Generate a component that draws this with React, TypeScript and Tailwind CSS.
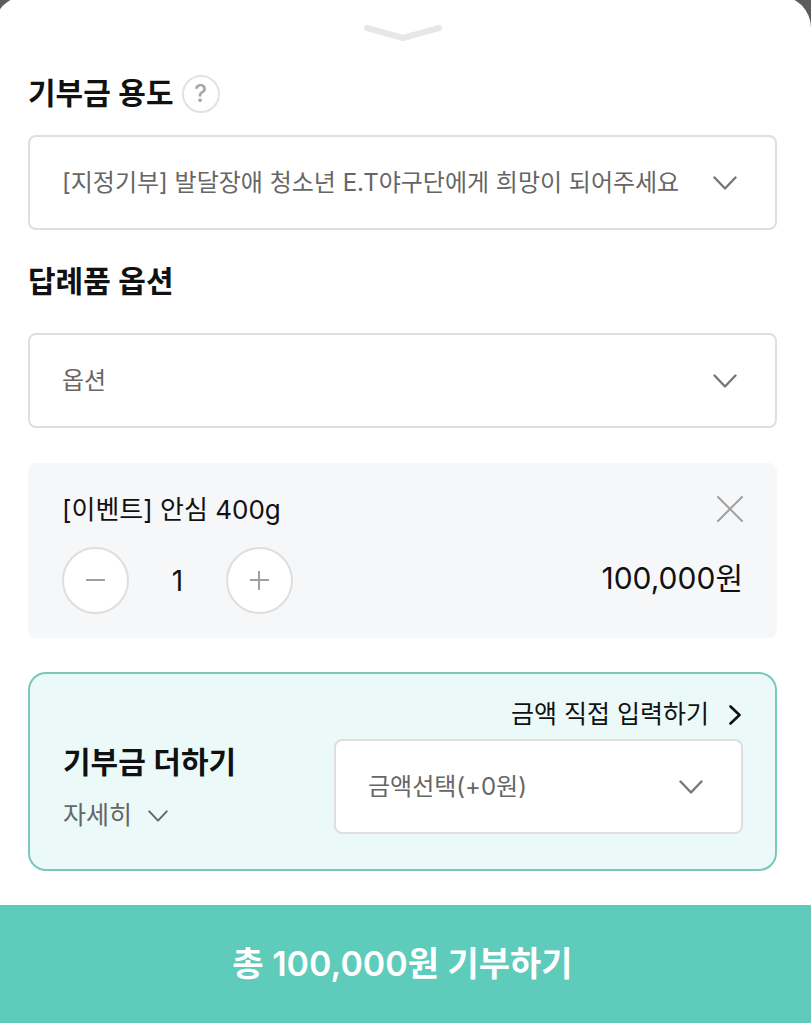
import { useState } from 'react'
import type { ReactNode } from 'react'

type IconProps = { className?: string }

function ChevronDown({ className = '' }: IconProps) {
  return (
    <svg
      viewBox="0 0 24 14"
      fill="none"
      stroke="currentColor"
      strokeWidth="2.4"
      strokeLinecap="round"
      strokeLinejoin="round"
      aria-hidden="true"
      className={className}
    >
      <path d="M1.5 1.5 12 12.5 22.5 1.5" />
    </svg>
  )
}

type SelectBoxProps = {
  id: string
  children: ReactNode
}

function SelectBox({ id, children }: SelectBoxProps) {
  return (
    <div className="grid items-center">
      <select
        id={id}
        className="col-start-1 row-start-1 h-[95px] w-full appearance-none rounded-lg border-2 border-[#dfdfdf] bg-white pr-20 pl-8 text-[24px] text-[#666]"
      >
        {children}
      </select>
      <ChevronDown className="pointer-events-none col-start-1 row-start-1 mr-10 h-[14px] w-6 justify-self-end text-[#777]" />
    </div>
  )
}

export default function App() {
  const [quantity, setQuantity] = useState(1)
  const total = `${(quantity * 100000).toLocaleString('en-US')}원`

  return (
    <div className="min-h-screen overflow-hidden bg-[#5c5c5c] font-['Inter','Noto_Sans_CJK_KR',sans-serif] text-[#111]">
      <main className="-mt-1 -ml-1.5 min-h-screen rounded-t-[32px] bg-white pb-0.5">
        {/* Handle */}
        <div className="flex justify-center pt-7">
          <button type="button" aria-label="닫기">
            <svg viewBox="0 0 80 18" fill="none" className="h-[18px] w-20">
              <path
                d="M4 4 40 14 76 4"
                stroke="#e7e7e7"
                strokeWidth="6"
                strokeLinecap="round"
                strokeLinejoin="round"
              />
            </svg>
          </button>
        </div>

        <div className="px-[34px]">
          {/* Purpose */}
          <div className="flex h-[93px] items-center gap-2 pt-2.5">
            <label htmlFor="purpose" className="text-[30px] font-semibold">
              기부금 용도
            </label>
            <button
              type="button"
              aria-label="기부금 용도 도움말"
              className="flex size-[38px] items-center justify-center rounded-full border-2 border-[#e2e2e2] text-[24px] leading-6 font-medium text-[#a6a6a6]"
            >
              ?
            </button>
          </div>
          <SelectBox id="purpose">
            <option>[지정기부] 발달장애 청소년 E.T야구단에게 희망이 되어주세요</option>
          </SelectBox>

          {/* Option */}
          <div className="flex h-[103px] items-center">
            <label htmlFor="option" className="text-[30px] font-semibold">
              답례품 옵션
            </label>
          </div>
          <SelectBox id="option">
            <option>옵션</option>
            <option>[이벤트] 안심 400g</option>
          </SelectBox>

          {/* Selected item */}
          <section className="mt-[35px] rounded-lg bg-[#f6f7f9] px-[34px] pt-6 pb-6">
            <div className="flex h-[44px] items-center justify-between">
              <h2 className="text-[26px]">[이벤트] 안심 400g</h2>
              <button type="button" aria-label="삭제">
                <svg
                  viewBox="0 0 26 26"
                  fill="none"
                  stroke="#a0a0a0"
                  strokeWidth="2"
                  strokeLinecap="round"
                  className="size-[26px]"
                >
                  <path d="M1 1 25 25M25 1 1 25" />
                </svg>
              </button>
            </div>
            <div className="mt-4 flex items-center justify-between">
              <div className="flex items-center">
                <button
                  type="button"
                  aria-label="수량 감소"
                  onClick={() => setQuantity(Math.max(1, quantity - 1))}
                  className="flex size-[67px] items-center justify-center rounded-full border-2 border-[#dedede] bg-white"
                >
                  <svg viewBox="0 0 20 20" stroke="#a0a0a0" strokeWidth="2" className="size-5">
                    <path d="M0 9h19" />
                  </svg>
                </button>
                <output className="w-[97px] text-center text-[28px]">{quantity}</output>
                <button
                  type="button"
                  aria-label="수량 증가"
                  onClick={() => setQuantity(quantity + 1)}
                  className="flex size-[67px] items-center justify-center rounded-full border-2 border-[#dedede] bg-white"
                >
                  <svg viewBox="0 0 20 20" stroke="#a0a0a0" strokeWidth="2" className="size-5">
                    <path d="M0 9h19M9 0v19" />
                  </svg>
                </button>
              </div>
              <p className="pb-1 text-[30px]">{total}</p>
            </div>
          </section>

          {/* Extra donation */}
          <section className="mt-[34px] flex justify-between rounded-[18px] border-2 border-[#7bc8bb] bg-[#ecf9f9] px-8 pt-5 pb-[34px]">
            <div className="pt-[46px] pl-px">
              <label htmlFor="extra" className="block text-[30px] font-semibold">
                기부금 더하기
              </label>
              <button type="button" className="mt-3 flex items-center gap-4 text-[25px] text-[#666]">
                자세히
                <ChevronDown className="h-3 w-5" />
              </button>
            </div>
            <div className="w-[409px]">
              <a href="#" className="flex h-[45px] items-center justify-end gap-5 pb-1 text-[25px]">
                금액 직접 입력하기
                <svg
                  viewBox="0 0 12 20"
                  fill="none"
                  stroke="currentColor"
                  strokeWidth="2.6"
                  strokeLinecap="round"
                  strokeLinejoin="round"
                  aria-hidden="true"
                  className="mr-0.5 h-5 w-3"
                >
                  <path d="M1.5 1.5 10.5 10 1.5 18.5" />
                </svg>
              </a>
              <SelectBox id="extra">
                <option>금액선택(+0원)</option>
              </SelectBox>
            </div>
          </section>
        </div>

        <button
          type="button"
          className="mt-[34px] h-[118px] w-full bg-[#5ecbbb] text-[34px] font-semibold text-white"
        >
          총 {total} 기부하기
        </button>
      </main>
    </div>
  )
}
